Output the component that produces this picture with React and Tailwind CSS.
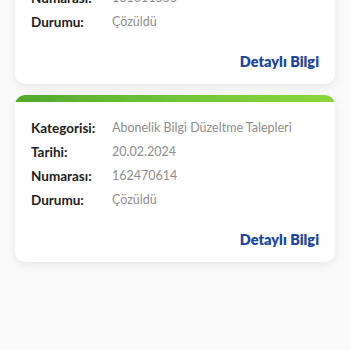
import React from "react";

const rows1 = [
  ["Kategorisi:", "Abonelik Bilgi Düzeltme Talepleri"],
  ["Tarihi:", "20.02.2024"],
  ["Numarası:", "161611555"],
  ["Durumu:", "Çözüldü"],
];
const rows2 = [
  ["Kategorisi:", "Abonelik Bilgi Düzeltme Talepleri"],
  ["Tarihi:", "20.02.2024"],
  ["Numarası:", "162470614"],
  ["Durumu:", "Çözüldü"],
];

function Card({ rows }) {
  return (
    <div className="bg-white rounded-[10px] shadow-[0_3px_10px_rgba(0,0,0,0.08)] overflow-hidden">
      <div className="h-[7px] rounded-t-[10px] bg-gradient-to-r from-[#52a82c] via-[#70c43a] to-[#8ad63e]" />
      <div className="pt-[14px] pb-[10px] px-[16px]">
        <div className="flex flex-col">
          {rows.map(([l, v]) => (
            <div key={l} className="flex items-center h-[24px]">
              <div className="w-[81px] shrink-0 text-[13.5px] font-bold text-[#222]">{l}</div>
              <div className="text-[12.5px] text-[#8e8e8e]">{v}</div>
            </div>
          ))}
        </div>
        <div className="mt-[16px] h-[24px] flex items-center justify-end text-[14.5px] font-extrabold text-[#23479b]">
          Detaylı Bilgi
        </div>
      </div>
    </div>
  );
}

export default function App() {
  return (
    <div className="w-[350px] h-[350px] overflow-hidden bg-[#fafafa]" style={{ fontFamily: "Lato, 'Noto Sans', sans-serif" }}>
      <div className="px-[15px] mt-[-83px] flex flex-col gap-[11px]">
        <Card rows={rows1} />
        <Card rows={rows2} />
      </div>
    </div>
  );
}
